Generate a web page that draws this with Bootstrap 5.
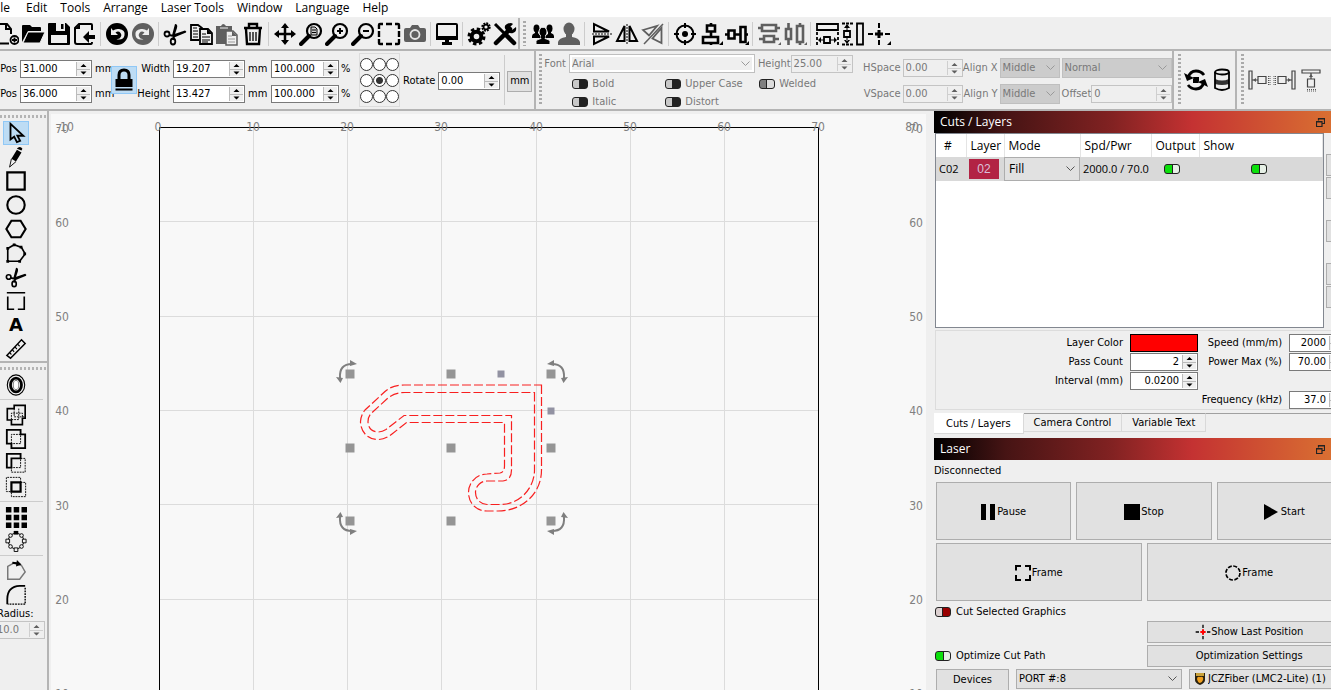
<!DOCTYPE html>
<html lang="en">
<head>
<meta charset="utf-8">
<meta name="viewport" content="width=device-width, initial-scale=1">
<title>Laser layout editor</title>
<link rel="stylesheet" href="https://cdn.jsdelivr.net/npm/bootstrap@5.3.0/dist/css/bootstrap.min.css">
<script defer src="https://cdn.jsdelivr.net/npm/bootstrap@5.3.0/dist/js/bootstrap.bundle.min.js"></script>
<style>
:root{--ui:"DejaVu Sans Condensed","DejaVu Sans",sans-serif;--seg:"Open Sans",sans-serif;--line:#b4b4b4}
body{height:100vh;overflow:hidden;background:#efefef;color:#000;font:11px/14px var(--ui)}
button{font:inherit;color:inherit;padding:0}
label{white-space:nowrap}
.menubar{height:18px;background:#fff;font:12px/16px var(--seg);gap:13px;border-bottom:1px solid #f0f0f0}
.menubar a{color:#000;text-decoration:none;white-space:nowrap}
.menubar a.cut-off{margin:0 3px 0 -9px}
.toolstrip{height:33px;border-bottom:2px solid var(--line);overflow:hidden}
.tb{width:26px;height:26px;flex:none;border:0;background:none;display:flex;align-items:center;justify-content:center}
.tb svg{width:24px;height:24px;flex:none}
.tb.first{margin-left:-6px}
.tb:disabled{color:#5f5f5f}
.vsep{width:6px;flex:none;height:24px;background:linear-gradient(#ccc,#ccc) 2px 0/1px 100% no-repeat}
.vsep.tall{height:50px}
.handle{display:flex;flex:none;align-self:stretch;border-left:2px solid var(--line);padding:0 4px 0 3px}
.grip{flex:none;width:3px;align-self:stretch;margin:3px 0;background:repeating-linear-gradient(#aaa 0 2px,transparent 2px 4px)}
.hgrip{height:3px;background:repeating-linear-gradient(90deg,#b4b4b4 0 2px,transparent 2px 4px)}
.propstrip{height:60px;border-bottom:2px solid var(--line);overflow:hidden}
.sect{flex:none;border-right:2px solid var(--line)}
.two{display:grid;flex:none;grid-template-columns:100%;grid-template-rows:18px 18px;row-gap:7px;align-items:center;padding-top:2px}
.two>.d-flex{gap:3px}
.pos{width:92px}
.dim{width:108px}
.unit{width:16px;margin-left:3px}
.unit.far{margin-right:7px}
.pct{width:12px;margin:0 6px 0 2px}
.spin{display:flex;height:18px;min-width:0;background:#fff;border:1px solid #7a7a7a;padding:1px}
.spin input{flex:1;min-width:0;border:0;padding:0 0 0 1px;background:none;color:inherit;font:inherit;outline:0}
.spin.num input{text-align:right;padding-right:3px}
.w72{width:72px;flex:none}.w68{width:68px}.w62{width:62px;flex:none}
.step{flex:none;width:14px;border-left:1px solid #bbb;background:#efefef url("data:image/svg+xml,%3Csvg xmlns='http://www.w3.org/2000/svg' width='13' height='14'%3E%3Cpath d='M0 7.500h13' stroke='%23bbb'/%3E%3Cpath d='M3.500 5h6L6.500 2zM3.500 9.500h6l-3 3z'/%3E%3C/svg%3E") center no-repeat}
.off{color:#787878}
.off .spin{background:#efefef;border-color:#c4c4c4}
.off .step{opacity:.6}
select{appearance:none;border:1px solid #adadad;border-radius:0;background:#e1e1e1 url("data:image/svg+xml,%3Csvg xmlns='http://www.w3.org/2000/svg' width='9' height='6'%3E%3Cpath d='M.5.5l4 4 4-4' fill='none' stroke='%23555'/%3E%3C/svg%3E") right 4px center no-repeat;color:inherit;font:inherit;padding:0 2px;height:20px}
.off select{background-color:#ccc;background-image:url("data:image/svg+xml,%3Csvg xmlns='http://www.w3.org/2000/svg' width='9' height='6'%3E%3Cpath d='M.5.5l4 4 4-4' fill='none' stroke='%23999'/%3E%3C/svg%3E");border-color:#bfbfbf;color:#787878;opacity:1}
.off .fsel{width:186px;height:19px;margin:0 3px;background-color:#efefef;box-shadow:inset 0 0 0 2px #fff}
.lockbtn{width:26px;height:28px;flex:none;background:#bddcf4;border:1px solid #90c8f6}
.anchors{flex:none;width:41px;height:54px;border:1px solid #dcdcdc;display:grid;grid-template-columns:repeat(3,13px);grid-auto-rows:16px;align-content:center;justify-items:center;align-items:center}
.anchors input{appearance:none;margin:0;width:13px;height:13px;border:1px solid #333;border-radius:50%;background:#fff}
.anchors input:checked{background:radial-gradient(#333 0 3px,#fff 4px)}
.rotate{gap:3px;margin:2px 2px 0 3px}
.sq{width:25px;height:21px;margin:2px 2px 0 -1px;border:1px solid #adadad;background:#e1e1e1}
.tog{appearance:none;flex:none;margin:0;width:16px;height:10px;border:1px solid #222;border-radius:3px;background:linear-gradient(90deg,#c8c8c8 0 6px,#222 6px)}
.tog:checked{background:linear-gradient(90deg,#808080 0 6px,#222 6px 7px,#dcdcdc 7px)}
.tog.live{background:linear-gradient(90deg,#dcd0d0 0 6px,#222 6px 7px,#900 7px)}
.tog.live:checked{background:linear-gradient(90deg,#0ce00c 0 7px,#222 7px 8px,#e6f0e6 8px)}
.fontsect .grip{margin:3px 2px 3px 3px}
.fontrow{padding-top:3px}
.fontgrid{display:grid;grid-template-columns:93px 94px auto;grid-auto-rows:18px;margin:2px 0 0 28px;align-items:center}
.spacegrid{display:grid;flex:none;grid-template-columns:37px 60px 33px 60px 110px;grid-template-rows:20px 20px;gap:6px 2px;align-items:center;margin-left:11px;padding-top:2px}
.spacegrid label{justify-self:end}
.rotary .tb:first-of-type{margin-left:2px}
.palette{width:49px;flex:none;border-right:2px solid var(--line);overflow:hidden}
.palette .tb{height:24px;margin-left:3px}
.palette .tb.on{background:#bddcf4;outline:1px solid #90c8f6;outline-offset:-1px}
.palette .tb svg{width:22px;height:22px}
.hgrip{margin:4px 0 3px}
.hsep{height:6px;background:linear-gradient(#ccc,#ccc) 0 2px/43px 1px no-repeat}
.split{height:2px;background:var(--line)}
.letter{font:900 18px/24px "DejaVu Sans",sans-serif}
.rad label{display:block;margin-left:-3px;line-height:14px}
.rad .spin{margin:0 2px 0 -6px}
.stage{flex:1;min-width:0;margin:3px 8px 0 2px;background:#f8f8f8}
.stage svg{display:block;width:100%;height:100%}
.stage text{font:12px var(--ui);fill:#808080}
.dock{width:397px;flex:none;overflow:hidden}
.ttl{height:22px;background:linear-gradient(90deg,#000,#461414 18%,#822222 45%,#c43232 65%,#d96f32);color:#fff;font:12px/22px var(--seg);padding:0 6px}
.wide{width:416px;margin-left:2px}
.layerbox{width:389px;height:195px;background:#fff;border:1px solid #828790;margin-left:1px;flex:none}
.layerbox table{table-layout:fixed;width:100%;font:11px/14px var(--seg)}
.layerbox th{font-weight:400;font-size:12px;height:23px;padding:0 4px;border-right:1px solid #e4e4e4}
.layerbox td{height:24px;padding:0 0 0 3px;background:#d9d9d9}
.layerbox td select{width:100%;height:24px;display:block;padding-left:4px;font-size:12px}
.layerbox td.outc{padding-left:13px}
.layerbox td.showc{padding-right:6px}
.swatch{width:30px;height:20px;background:#b22344;color:#d9c0d9;text-align:center;font:12px/20px "Liberation Sans",sans-serif}
.sidebtns{padding:21px 0 0 2px}
.sidebtns button{display:block;width:20px;height:22px;border:1px solid #adadad;background:#e1e1e1}
.sidebtns .gap{margin-top:21px}
.sidebtns button+button:not(.gap){margin-top:1px}
.params{margin:2px 0 0 1px;height:80px;border:1px solid #dcdcdc;display:grid;grid-template-columns:187px 68px 77px 56px;column-gap:7px;grid-template-rows:repeat(4,19px);padding-top:2px;align-items:center}
.params label{justify-self:end}
.colorpick{height:18px;background:#f00;border:1px solid #000}
.tabs{margin-top:3px;height:21px}
.tabs button{border:0;border-right:1px solid #d9d9d9;border-bottom:1px solid #d9d9d9;border-top:1px solid #a0a0a0;height:19px;padding:0 10px;background:#f0f0f0}
.tabs button.act{background:#fff;height:21px;padding:0 12px;border-top-color:#fff}
.tabs i{flex:1;border-top:1px solid #a0a0a0}
.discon{height:22px;line-height:22px}
.push{border:1px solid #adadad;background:#e1e1e1;display:flex;align-items:center;justify-content:center}
.big{height:58px;padding-top:1px}.mid{height:22px}
.g3{display:grid;grid-template-columns:repeat(3,1fr);gap:5px;margin-bottom:3px}
.g2{display:grid;grid-template-columns:repeat(2,1fr);column-gap:5px}
.selrow{gap:5px;margin:4px 0 2px -1px}
.opt{row-gap:2px}
.devrow{margin-top:2px;gap:7px}
.devb{width:73px}.port{width:166px}
.dev{padding-left:18px}
.badge-ic{left:5px;top:3px}
.redmid{--mid:#f00}
</style>
</head>
<body class="d-flex flex-column">
<svg class="d-none" xmlns="http://www.w3.org/2000/svg">
<defs>
<symbol id="new" viewBox="0 0 24 24"><path d="M14 21.500H1V2h11l4 5v5M11 2v5h5" fill="none" stroke="currentColor" stroke-width="2"/><circle cx="19.500" cy="18" r="4" fill="none" stroke="currentColor" stroke-width="1.800"/><path d="M19.500 15.500v5M17 18h5" stroke="currentColor" stroke-width="1.800"/></symbol>
<symbol id="open" viewBox="0 0 24 24"><path d="M1 20V4q0-1 1-1h7l2 2h8q1 0 1 1v3H7z"/><path d="M2 21L7 10h17l-5 11z" stroke="#efefef" stroke-width="1"/></symbol>
<symbol id="save" viewBox="0 0 24 24"><path d="M2 1h17l4 4v17q0 1-1 1H2q-1 0-1-1V2q0-1 1-1z"/><path d="M9 1h9v8H9z" fill="#efefef"/><path d="M14 2h2.500v5H14z"/><path d="M4 13h16v8H4z" fill="#efefef"/></symbol>
<symbol id="import" viewBox="0 0 24 24"><path d="M19 8V3q0-1-1-1H6L2 6v14q0 2 2 2h14q1 0 1-2" fill="none" stroke="currentColor" stroke-width="2"/><path d="M7 2v5H2z"/><path d="M10 15l6-6v4h6v4h-6v4z"/></symbol>
<symbol id="undo" viewBox="0 0 24 24"><circle cx="12" cy="12" r="11"/><path d="M6 6v7h7l-2.500-2.500q3-2 5 .5t-1 5.500l-3 .8q7 1.500 8-4T14 7q-3.500-.5-6 1.500z" fill="#efefef"/></symbol>
<symbol id="scis" viewBox="0 0 24 24"><path d="M9 13.500L12 2q3 0 2 4l-3 9zM10 12.500l12-4q2 1 1 2l-12 5z" fill="currentColor"/><circle cx="4" cy="12" r="2.500" fill="none" stroke="currentColor" stroke-width="1.800"/><ellipse cx="10" cy="19.500" rx="2.300" ry="3" fill="none" stroke="currentColor" stroke-width="1.800"/><path d="M6 13l5 1-1 4" fill="none" stroke="currentColor" stroke-width="2"/></symbol>
<symbol id="copy" viewBox="0 0 24 24"><path d="M10 18H2V3h7l4 3v2" fill="none" stroke="currentColor" stroke-width="1.800"/><path d="M4 6h4M4 9h5M4 12h5M4 15h5" stroke="currentColor"/><path d="M11 7h8l4 4v11H11z" fill="#efefef" stroke="currentColor" stroke-width="1.800"/><path d="M18 7v5h5z"/><path d="M13 12h4M13 15h8M13 18h8M13 20h6" stroke="currentColor"/></symbol>
<symbol id="paste" viewBox="0 0 24 24"><path d="M1 4h5q2-4 5 0h6v5h-6v13H1z"/><path d="M5 6h8" stroke="#efefef"/><path d="M11 9h7l4 4v10H11z" fill="#efefef" stroke="currentColor" stroke-width="1.500"/><path d="M17 9v5h5z"/><path d="M13 14h4M13 17h7M13 20h7" stroke="#999"/></symbol>
<symbol id="trash" viewBox="0 0 24 24"><path d="M3 6h18M8 5V2h8v3M5 7l1 15h12l1-15" fill="none" stroke="currentColor" stroke-width="2.400"/><path d="M9 10v9M12 10v9M15 10v9" stroke="currentColor" stroke-width="1.300"/></symbol>
<symbol id="move" viewBox="0 0 24 24"><path d="M12 3v18M3 12h18" stroke="currentColor" stroke-width="2.500"/><path d="M12 1l4 5H8zM12 23l4-5H8zM1 12l5-4v8zM23 12l-5-4v8z"/></symbol>
<symbol id="lens" viewBox="0 0 24 24"><circle cx="15" cy="9" r="7" fill="none" stroke="currentColor" stroke-width="2.200"/><path d="M10 14l-8 8" stroke="currentColor" stroke-width="4" stroke-linecap="round"/></symbol>
<symbol id="zdoc" viewBox="0 0 24 24"><use href="#lens"/><path d="M12 5h4l2 2v6h-6z" fill="#ccc" stroke="currentColor"/><path d="M13 8h4M13 10.500h4" stroke="currentColor"/></symbol>
<symbol id="zin" viewBox="0 0 24 24"><use href="#lens"/><path d="M15 6v6M12 9h6" stroke="currentColor" stroke-width="2"/></symbol>
<symbol id="zout" viewBox="0 0 24 24"><use href="#lens"/><path d="M12 9h6" stroke="currentColor" stroke-width="2"/></symbol>
<symbol id="frame" viewBox="0 0 24 24"><path d="M2 7V3q0-1 1-1h3M9 2h6M18 2h3q1 0 1 1v4M22 9v6M22 17v4q0 1-1 1h-3M15 22H9M6 22H3q-1 0-1-1v-4M2 15V9" fill="none" stroke="currentColor" stroke-width="2.400"/></symbol>
<symbol id="cam" viewBox="0 0 24 24"><path d="M3 6h4l2-3h6l2 3h4q2 0 2 2v10q0 2-2 2H3q-2 0-2-2V8q0-2 2-2z"/><circle cx="12" cy="12.500" r="4.500" fill="none" stroke="#e4e4e4" stroke-width="1.800"/></symbol>
<symbol id="mon" viewBox="0 0 24 24"><rect x="2" y="2" width="20" height="14" rx="1" fill="none" stroke="currentColor" stroke-width="2"/><path d="M1 14h22v4H1zM10 17h4v4h-4zM7 20h10v3H7z"/></symbol>
<symbol id="gears" viewBox="0 0 24 24"><circle cx="9.500" cy="14.500" r="7" fill="none" stroke="currentColor" stroke-width="4" stroke-dasharray="3.200 2.300"/><circle cx="9.500" cy="14.500" r="4.800" fill="none" stroke="currentColor" stroke-width="4"/><circle cx="19" cy="5" r="3.600" fill="none" stroke="currentColor" stroke-width="2.200" stroke-dasharray="1.800 1"/><circle cx="19" cy="5" r="2.400" fill="none" stroke="currentColor" stroke-width="1.600"/></symbol>
<symbol id="wrench" viewBox="0 0 24 24"><path d="M2 2l9 9" stroke="currentColor" stroke-width="3"/><path d="M13 13l8 8" stroke="currentColor" stroke-width="4.500" stroke-linecap="round"/><path d="M3 21L17 7" stroke="currentColor" stroke-width="4.500" stroke-linecap="round"/><path d="M20 2l-3 3 2 3 4-3q1 5-3 6t-7-3 1-6 6 0z"/></symbol>
<symbol id="user" viewBox="0 0 24 24"><ellipse cx="12" cy="7" rx="5.500" ry="6.500"/><path d="M9 11h6v4q7 1 8 5v3H1v-3q1-4 8-5z"/></symbol>
<symbol id="users" viewBox="0 0 24 24"><ellipse cx="5.500" cy="6.500" rx="3" ry="4"/><ellipse cx="18.500" cy="6.500" rx="3" ry="4"/><path d="M4 9h3v2l3 3v2H1v-2q0-2 3-3zM17 9h3v2q3 1 3 3v2h-9v-2l3-2z"/><g stroke="#efefef"><ellipse cx="12" cy="10" rx="4" ry="4.800"/><path d="M5 22.500v-3q0-2 5-3v-3h4v3q5 1 5 3v3z"/></g><path d="M10 12h4v4h-4z"/></symbol>
<symbol id="flipv" viewBox="0 0 24 24"><path d="M5 2v7.500h15zM5 22v-7.500h15z" fill="none" stroke="currentColor" stroke-width="2"/><path d="M3 12h20" stroke="#555" stroke-width="1.500" stroke-dasharray="2 1"/></symbol>
<symbol id="fliph" viewBox="0 0 24 24"><path d="M2 19h7.500V4zM22 19h-7.500V4z" fill="none" stroke="currentColor" stroke-width="2"/><path d="M12 2v21" stroke="#555" stroke-width="1.500" stroke-dasharray="2 1"/></symbol>
<symbol id="mirr" viewBox="0 0 24 24"><path d="M2 8l14-4-8 9.500zM20.500 6v15l-9-4.500z" fill="none" stroke="currentColor" stroke-width="1.800"/><path d="M22 2L3 22" stroke="currentColor" stroke-width="1.500"/></symbol>
<symbol id="target" viewBox="0 0 24 24"><circle cx="12" cy="12" r="8.500" fill="none" stroke="currentColor" stroke-width="2"/><circle cx="12" cy="12" r="3"/><path d="M12 1v5M12 18v5M1 12h5M18 12h5" stroke="currentColor" stroke-width="2"/></symbol>
<symbol id="alv" viewBox="0 0 24 24"><path d="M8 3.500h8v6H8zM4 15h15v6H4zM12 1v2M12 10v5M12 21v2" fill="none" stroke="currentColor" stroke-width="2.600"/><path d="M24 19v4h-4z"/></symbol>
<symbol id="alh" viewBox="0 0 24 24"><path d="M3.500 8.500h6v8h-6zM15.500 5h5v15h-5zM0 12.500h3M10 12.500h6M21 12.500h2" fill="none" stroke="currentColor" stroke-width="2.600"/><path d="M24 19v4h-4z"/></symbol>
<symbol id="div" viewBox="0 0 24 24"><path d="M5 3h14v6H5zM7 14h10v6H7zM1 6h4M19 6h4M2 17h5M17 17h5" fill="none" stroke="currentColor" stroke-width="2.600"/><path d="M24 20v3h-3z"/></symbol>
<symbol id="dih" viewBox="0 0 24 24"><path d="M3 7h5v10H3zM14 4h6v16h-6zM5.500 1v6M5.500 17v6M17 1v3M17 20v3" fill="none" stroke="currentColor" stroke-width="2.600"/><path d="M24 20v3h-3z"/></symbol>
<symbol id="wid" viewBox="0 0 24 24"><path d="M2 2h21v6H2z" fill="none" stroke="currentColor" stroke-width="1.800"/><path d="M2 10v13M23 10v13" stroke="currentColor" stroke-width="1.800" stroke-dasharray="3 2"/><path d="M9 15h6v6H9z" fill="none" stroke="currentColor" stroke-width="1.800"/><path d="M3 18l3-3v6zM22 18l-3-3v6zM5 17.500h4v1H5zM15 17.500h4v1h-4z"/></symbol>
<symbol id="hei" viewBox="0 0 24 24"><path d="M16 1.500h6v21h-6z" fill="none" stroke="currentColor" stroke-width="1.800"/><path d="M1 1.500h11M1 22.500h11" stroke="currentColor" stroke-width="1.800" stroke-dasharray="3 1"/><path d="M3 9h6v6H3z" fill="none" stroke="currentColor" stroke-width="1.800"/><path d="M6 2l3 4H3zM6 22l3-4H3zM5.500 5h1v4h-1zM5.500 15h1v4h-1z"/></symbol>
<symbol id="cross" viewBox="0 0 24 24"><path d="M12 1v5M12 18v5M1 12h5M18 12h5" stroke="currentColor" stroke-width="2"/><path d="M12 8v8M8 12h8" stroke="var(--mid,currentColor)" stroke-width="3"/></symbol>
<symbol id="lock" viewBox="0 0 24 24"><path d="M7 12V7q0-5 5-5t5 5v5" fill="none" stroke="currentColor" stroke-width="3"/><path d="M3.500 11h17v8h-17zM3.500 20.500h17v2h-17z"/></symbol>
<symbol id="cyc" viewBox="0 0 24 24"><path d="M4 10q2-7 8-7 5 0 8 4M20 14q-2 7-8 7-5 0-8-4" fill="none" stroke="currentColor" stroke-width="2.800"/><path d="M0 5l3 8 7-3zM24 19l-3-8-7 3zM9 9h6v6H9z"/></symbol>
<symbol id="cyl" viewBox="0 0 24 24"><path d="M5 4v16q7 4 14 0V4z" fill="#efefef"/><path d="M5 11q7 3 14 0v5q-7 2-14 0z" fill="#333"/><path d="M5 4v16q7 4 14 0V4" fill="none" stroke="currentColor" stroke-width="1.800"/><ellipse cx="12" cy="4" rx="7" ry="2.500" fill="#efefef" stroke="currentColor" stroke-width="1.800"/></symbol>
<symbol id="pushl" viewBox="0 0 24 24"><path d="M2 3h3v18H2zM11 8.500h8v7h-8zM5 12h6" fill="none" stroke="#444" stroke-width="1.200"/><path d="M6 12l3-2v4z" fill="#555"/><path d="M21.500 8v9M23 8v9" stroke="#555" stroke-dasharray="1 1"/></symbol>
<symbol id="arrow" viewBox="0 0 24 24"><path d="M6 2v17l4-3 3 6 3.500-1.500-3-5.500H20z" fill="none" stroke="currentColor" stroke-width="2"/></symbol>
<symbol id="pen" viewBox="0 0 24 24"><path d="M14 2q3-2 5 1l-1 2-5-2zM13 4l5 3-6 10-5-3z"/><path d="M7 14l-2 9 7-6" fill="none" stroke="currentColor"/></symbol>
<symbol id="rect" viewBox="0 0 24 24"><path d="M2.500 2.500h19v19h-19z" fill="none" stroke="currentColor" stroke-width="2.400"/></symbol>
<symbol id="circ" viewBox="0 0 24 24"><circle cx="12" cy="12" r="9.500" fill="none" stroke="currentColor" stroke-width="2.300"/></symbol>
<symbol id="hexa" viewBox="0 0 24 24"><path d="M7 3h10l5.500 9L17 21H7l-5.500-9z" fill="none" stroke="currentColor" stroke-width="2.300"/></symbol>
<symbol id="poly" viewBox="0 0 24 24"><path d="M3 21V7l7-4 8 3 4 7-6 8z" fill="none" stroke="currentColor" stroke-width="1.800"/><path d="M1.500 19.500h3v3h-3zM1.500 5.500h3v3h-3zM8.500 1.500h3v3h-3zM16 4h3v3h-3zM20 11.500h3v3h-3zM14.500 19.500h3v3h-3z"/></symbol>
<symbol id="edit" viewBox="0 0 24 24"><path d="M2 3h20M3 7v14h7M14 21h7V7" fill="none" stroke="currentColor" stroke-width="1.800"/></symbol>
<symbol id="ruler" viewBox="0 0 24 24"><path d="M2 19L18 2l4 4L6 22z" fill="none" stroke="currentColor" stroke-width="1.600"/><path d="M5 16l2 2M8 13l2 2M11 10l2 2M14 7l2 2" stroke="currentColor" stroke-width="1.200"/></symbol>
<symbol id="offs" viewBox="0 0 24 24"><ellipse cx="12" cy="12" rx="9.500" ry="11" fill="none" stroke="currentColor" stroke-width="1.200"/><ellipse cx="12" cy="12" rx="6" ry="7.500" fill="none" stroke="currentColor" stroke-width="3"/><ellipse cx="12" cy="12" rx="3" ry="5" fill="#fff" stroke="#777"/></symbol>
<symbol id="b1" viewBox="0 0 24 24"><path d="M10 1.500h12v14h-3v7H7v-5H2.500V5H10z" fill="none" stroke="currentColor" stroke-width="1.800"/><path d="M10 5v9h12M7 17V10h12v6M15 5v12H7" fill="none" stroke="currentColor" stroke-dasharray="2 1"/></symbol>
<symbol id="b2" viewBox="0 0 24 24"><path d="M2 2h15v5h5v15H7v-5H2z" fill="none" stroke="currentColor" stroke-width="2"/><path d="M7 17V7h10v10z" fill="none" stroke="currentColor" stroke-dasharray="2 1"/></symbol>
<symbol id="b3" viewBox="0 0 24 24"><path d="M2 2h15v5H7v10H2z" fill="none" stroke="currentColor" stroke-width="2"/><path d="M17 7h5v15H7v-5h10z" fill="none" stroke="currentColor" stroke-dasharray="2 1"/></symbol>
<symbol id="b4" viewBox="0 0 24 24"><path d="M7 7h10v10H7z" fill="none" stroke="currentColor" stroke-width="2.400"/><path d="M17 7V1.500H1.500V17H7M17 7h5.500v15.500H7V17" fill="none" stroke="currentColor" stroke-dasharray="2 1"/></symbol>
<symbol id="arr" viewBox="0 0 24 24"><path d="M1 1h6v6H1zM9.500 1h6v6h-6zM18 1h6v6h-6zM1 9.500h6v6H1zM9.500 9.500h6v6h-6zM18 9.500h6v6h-6zM1 18h6v6H1zM9.500 18h6v6h-6zM18 18h6v6h-6z"/></symbol>
<symbol id="rad" viewBox="0 0 24 24"><circle cx="12" cy="12" r="8.500" fill="none" stroke="currentColor"/><g fill="#efefef" stroke="currentColor"><path d="M10 19.500h4v4h-4zM1 10h4v4H1zM19 10h4v4h-4z"/><circle cx="6" cy="6" r="2"/><circle cx="18" cy="6" r="2"/><circle cx="6" cy="18" r="2"/><circle cx="18" cy="18" r="2"/></g><path d="M9.500 1h5v4h-5z"/></symbol>
<symbol id="poly2" viewBox="0 0 24 24"><path d="M3 21V7l7-4 8 3 4 7-6 8z" fill="none" stroke="#777" stroke-width="1.600"/><path d="M8 3l7 1" stroke="currentColor" stroke-width="2.400"/><path d="M13 0l5 5-6 2z"/></symbol>
<symbol id="fil" viewBox="0 0 24 24"><path d="M2.500 22v-6Q3 2.500 16 2h6" fill="none" stroke="currentColor" stroke-width="2"/><path d="M22 4v18H3" fill="none" stroke="currentColor" stroke-width="1.500" stroke-dasharray="2 1"/></symbol>
<symbol id="float" viewBox="0 0 9 9"><path d="M2.500 2.500V.5h6v5h-2M2.500 1h6M.5 3.500h5.500v5H.5zM.5 4h5.500" fill="none" stroke="#222" stroke-width="1.200"/></symbol>
<g id="rot"><path d="M340 378Q339 364 352 364" fill="none" stroke="#7f7f7f" stroke-width="2"/><path d="M350 360l7 4-7 2zM336 377l7 1-2.500 5z" fill="#7f7f7f"/></g>
</defs>
</svg>

<nav class="menubar d-flex flex-shrink-0" aria-label="Main menu">
<a class="cut-off" href="#">File</a><a href="#">Edit</a><a href="#">Tools</a><a href="#">Arrange</a><a href="#">Laser Tools</a><a href="#">Window</a><a href="#">Language</a><a href="#">Help</a>
</nav>

<div class="toolstrip d-flex align-items-center flex-shrink-0" role="toolbar" aria-label="Main tools">
<button class="tb first" aria-label="New"><svg><use href="#new"/></svg></button>
<button class="tb" aria-label="Open"><svg><use href="#open"/></svg></button>
<button class="tb" aria-label="Save"><svg><use href="#save"/></svg></button>
<button class="tb" aria-label="Import"><svg><use href="#import"/></svg></button>
<span class="vsep"></span>
<button class="tb" aria-label="Undo"><svg><use href="#undo"/></svg></button>
<button class="tb" aria-label="Redo" disabled><svg fill="currentColor"><use href="#undo" transform="matrix(-1 0 0 1 24 0)"/></svg></button>
<span class="vsep"></span>
<button class="tb" aria-label="Cut"><svg><use href="#scis"/></svg></button>
<button class="tb" aria-label="Copy"><svg><use href="#copy"/></svg></button>
<button class="tb" aria-label="Paste" disabled><svg fill="currentColor"><use href="#paste"/></svg></button>
<button class="tb" aria-label="Delete"><svg><use href="#trash"/></svg></button>
<span class="vsep"></span>
<button class="tb" aria-label="Pan"><svg><use href="#move"/></svg></button>
<button class="tb" aria-label="Zoom to page"><svg><use href="#zdoc"/></svg></button>
<button class="tb" aria-label="Zoom in"><svg><use href="#zin"/></svg></button>
<button class="tb" aria-label="Zoom out"><svg><use href="#zout"/></svg></button>
<button class="tb" aria-label="Frame selection"><svg><use href="#frame"/></svg></button>
<button class="tb" aria-label="Camera" disabled><svg fill="currentColor"><use href="#cam"/></svg></button>
<span class="vsep"></span>
<button class="tb" aria-label="Preview"><svg><use href="#mon"/></svg></button>
<span class="vsep"></span>
<button class="tb" aria-label="Settings"><svg><use href="#gears"/></svg></button>
<button class="tb" aria-label="Device settings"><svg><use href="#wrench"/></svg></button>
<span class="handle"><span class="grip"></span></span>
<button class="tb" aria-label="Group"><svg><use href="#users"/></svg></button>
<button class="tb" aria-label="Ungroup" disabled><svg fill="currentColor"><use href="#user"/></svg></button>
<span class="vsep"></span>
<button class="tb" aria-label="Flip vertical"><svg><use href="#flipv"/></svg></button>
<button class="tb" aria-label="Flip horizontal"><svg><use href="#fliph"/></svg></button>
<button class="tb" aria-label="Mirror" disabled><svg><use href="#mirr"/></svg></button>
<span class="vsep"></span>
<button class="tb" aria-label="Centre"><svg><use href="#target"/></svg></button>
<button class="tb" aria-label="Align vertical"><svg><use href="#alv"/></svg></button>
<button class="tb" aria-label="Align horizontal"><svg><use href="#alh"/></svg></button>
<span class="vsep"></span>
<button class="tb" aria-label="Distribute vertical" disabled><svg fill="currentColor"><use href="#div"/></svg></button>
<button class="tb" aria-label="Distribute horizontal" disabled><svg fill="currentColor"><use href="#dih"/></svg></button>
<span class="vsep"></span>
<button class="tb" aria-label="Same width"><svg><use href="#wid"/></svg></button>
<button class="tb" aria-label="Same height"><svg><use href="#hei"/></svg></button>
<button class="tb" aria-label="Move to position"><svg><use href="#cross"/><path d="M24 19v4h-4z"/></svg></button>
</div>

<div class="propstrip d-flex flex-shrink-0">
<section class="sect d-flex align-items-center" aria-label="Transform">
<div class="two pos">
<div class="d-flex align-items-center justify-content-end"><label for="xp">XPos</label><div class="spin w72"><input id="xp" value="31.000"><span class="step"></span></div></div>
<div class="d-flex align-items-center justify-content-end"><label for="yp">YPos</label><div class="spin w72"><input id="yp" value="36.000"><span class="step"></span></div></div>
</div>
<div class="two unit"><span>mm</span><span>mm</span></div>
<button class="lockbtn" aria-label="Lock aspect ratio"><svg width="24" height="24"><use href="#lock"/></svg></button>
<div class="two dim">
<div class="d-flex align-items-center justify-content-end"><label for="wd">Width</label><div class="spin w72"><input id="wd" value="19.207"><span class="step"></span></div></div>
<div class="d-flex align-items-center justify-content-end"><label for="hg">Height</label><div class="spin w72"><input id="hg" value="13.427"><span class="step"></span></div></div>
</div>
<div class="two unit far"><span>mm</span><span>mm</span></div>
<div class="two w68 flex-shrink-0">
<div class="spin"><input aria-label="Width percent" value="100.000"><span class="step"></span></div>
<div class="spin"><input aria-label="Height percent" value="100.000"><span class="step"></span></div>
</div>
<div class="two pct"><span>%</span><span>%</span></div>
<div class="anchors">
<input type="radio" name="an" aria-label="Top left"><input type="radio" name="an" aria-label="Top"><input type="radio" name="an" aria-label="Top right">
<input type="radio" name="an" aria-label="Left"><input type="radio" name="an" aria-label="Centre" checked><input type="radio" name="an" aria-label="Right">
<input type="radio" name="an" aria-label="Bottom left"><input type="radio" name="an" aria-label="Bottom"><input type="radio" name="an" aria-label="Bottom right">
</div>
<div class="rotate d-flex align-items-center"><label for="ro">Rotate</label><div class="spin w62"><input id="ro" value="0.00"><span class="step"></span></div></div>
<span class="vsep tall"></span>
<button class="sq">mm</button>
</section>
<section class="sect fontsect off d-flex" aria-label="Text">
<span class="grip"></span>
<div>
<div class="d-flex align-items-center fontrow"><label for="fo">Font</label><select id="fo" class="fsel" disabled><option>Arial</option></select><label for="fh">Height</label><div class="spin w62"><input id="fh" value="25.00" disabled><span class="step"></span></div></div>
<div class="fontgrid">
<label class="d-flex align-items-center gap-1"><input class="tog" type="checkbox" disabled>Bold</label>
<label class="d-flex align-items-center gap-1"><input class="tog" type="checkbox" disabled>Upper Case</label>
<label class="d-flex align-items-center gap-1"><input class="tog" type="checkbox" checked disabled>Welded</label>
<label class="d-flex align-items-center gap-1"><input class="tog" type="checkbox" disabled>Italic</label>
<label class="d-flex align-items-center gap-1"><input class="tog" type="checkbox" disabled>Distort</label>
</div>
</div>
<div class="spacegrid align-self-center">
<label for="hs">HSpace</label><div class="spin"><input id="hs" value="0.00" disabled><span class="step"></span></div><label for="ax">Align X</label><select id="ax" disabled><option>Middle</option></select><select aria-label="Text style" disabled><option>Normal</option></select>
<label for="vs">VSpace</label><div class="spin"><input id="vs" value="0.00" disabled><span class="step"></span></div><label for="ay">Align Y</label><select id="ay" disabled><option>Middle</option></select><div class="d-flex align-items-center"><label for="of" class="flex-shrink-0">Offset</label><div class="spin flex-fill"><input id="of" value="0" disabled><span class="step"></span></div></div>
</div>
</section>
<section class="sect rotary d-flex align-items-center ps-1" aria-label="Rotary"><span class="grip"></span>
<button class="tb" aria-label="Rotary setup"><svg><use href="#cyc"/></svg></button><button class="tb" aria-label="Cylinder correction"><svg><use href="#cyl"/></svg></button></section>
<section class="rotary d-flex align-items-center ps-1" aria-label="Docking"><span class="grip"></span>
<button class="tb" aria-label="Dock left"><svg><use href="#pushl"/></svg></button><button class="tb" aria-label="Dock right"><svg><use href="#pushl" transform="matrix(-1 0 0 1 24 0)"/></svg></button><button class="tb" aria-label="Dock top"><svg><use href="#pushl" transform="matrix(0 1 1 0 0 0)"/></svg></button></section>
</div>

<main class="d-flex flex-fill overflow-hidden">
<aside class="palette" role="toolbar" aria-label="Drawing tools">
<div class="hgrip"></div>
<button class="tb on" aria-label="Select"><svg><use href="#arrow"/></svg></button>
<button class="tb" aria-label="Draw lines"><svg><use href="#pen"/></svg></button>
<button class="tb" aria-label="Rectangle"><svg><use href="#rect"/></svg></button>
<button class="tb" aria-label="Ellipse"><svg><use href="#circ"/></svg></button>
<button class="tb" aria-label="Polygon"><svg><use href="#hexa"/></svg></button>
<button class="tb" aria-label="Edit nodes"><svg><use href="#poly"/></svg></button>
<button class="tb" aria-label="Trim"><svg><use href="#scis"/></svg></button>
<button class="tb" aria-label="Tabs"><svg><use href="#edit"/></svg></button>
<button class="tb letter" aria-label="Text">A</button>
<button class="tb" aria-label="Measure"><svg><use href="#ruler"/></svg></button>
<div class="split"></div>
<div class="hgrip"></div>
<button class="tb" aria-label="Offset shapes"><svg><use href="#offs"/></svg></button>
<div class="hsep"></div>
<button class="tb" aria-label="Weld"><svg><use href="#b1"/></svg></button>
<button class="tb" aria-label="Union"><svg><use href="#b2"/></svg></button>
<button class="tb" aria-label="Subtract"><svg><use href="#b3"/></svg></button>
<button class="tb" aria-label="Intersect"><svg><use href="#b4"/></svg></button>
<div class="hsep"></div>
<button class="tb" aria-label="Grid array"><svg><use href="#arr"/></svg></button>
<button class="tb" aria-label="Radial array"><svg><use href="#rad"/></svg></button>
<div class="hsep"></div>
<button class="tb" aria-label="Start point"><svg><use href="#poly2"/></svg></button>
<button class="tb" aria-label="Fillet"><svg><use href="#fil"/></svg></button>
<div class="rad"><label for="ra">Radius:</label><div class="off"><div class="spin"><input id="ra" value="10.0" disabled><span class="step"></span></div></div></div>
</aside>

<div class="stage">
<svg role="img" aria-label="Work area"><g transform="translate(-51 -114)">
<path d="M253.500 128v700M347.500 128v700M441.500 128v700M536.500 128v700M630.500 128v700M724.500 128v700M160 221.500h658M160 316.500h658M160 410.500h658M160 504.500h658M160 599.500h658" stroke="#dcdcdc"/>
<path d="M159.500 830V127.500h659V830" fill="none" stroke="#000"/>
<g text-anchor="middle"><text x="65" y="131">-10</text><text x="158" y="131">0</text><text x="253" y="131">10</text><text x="347" y="131">20</text><text x="441" y="131">30</text><text x="536" y="131">40</text><text x="630" y="131">50</text><text x="724" y="131">60</text><text x="818" y="131">70</text><text x="912" y="131">80</text>
<text x="62" y="133">70</text><text x="62" y="227">60</text><text x="62" y="321">50</text><text x="62" y="415">40</text><text x="62" y="510">30</text><text x="62" y="604">20</text><text x="62" y="698">10</text>
<text x="916" y="133">70</text><text x="916" y="227">60</text><text x="916" y="321">50</text><text x="916" y="415">40</text><text x="916" y="510">30</text><text x="916" y="604">20</text><text x="916" y="698">10</text></g>
<g fill="none" stroke="#f82020" stroke-width="1.200" stroke-dasharray="9 3">
<path d="M541.500 385V470C541.500 494 522 511 498 511H487C475 511 468.500 502 468.500 492.500S476 474 487 474L500 473Q504.500 472 504.500 466V422.500H406.500L392 434Q385 439.500 378 439.500C367 439.500 360.500 431 360.500 421.500Q361 415 365 410L385 391.500Q392 385 404 385Z"/>
<path d="M534.500 392.500V470C534.500 488 520 504.500 500 504.500H487C479 504 475.500 498 475.500 492.500S480 481 487 481H503Q511.500 480 511.500 470V415.500H404L386 429.500Q382 432 378 432C371 431.500 368 427 368 421.500Q368 417 371 413.500L388 398Q395 392.500 405 392.500Z"/></g>
<path fill="#959595" d="M345.500 369.500h9v9h-9zM446.500 369.500h9v9h-9zM546.500 369.500h9v9h-9zM345.500 443.500h9v9h-9zM446.500 443.500h9v9h-9zM546.500 443.500h9v9h-9zM345.500 516.500h9v9h-9zM446.500 516.500h9v9h-9zM546.500 516.500h9v9h-9z"/>
<path fill="#9292a2" d="M497.500 370.500h7v7h-7zM547.500 407.500h7v7h-7z"/>
<use href="#rot"/><use href="#rot" transform="matrix(-1 0 0 1 904 0)"/><use href="#rot" transform="matrix(1 0 0 -1 0 895)"/><use href="#rot" transform="matrix(-1 0 0 -1 904 895)"/>
</g></svg>
</div>

<aside class="dock">
<div class="ttl d-flex justify-content-between align-items-center">Cuts / Layers<svg width="9" height="9"><use href="#float"/></svg></div>
<div class="d-flex">
<div class="layerbox">
<table>
<colgroup><col style="width:30px"><col style="width:38px"><col style="width:76px"><col style="width:71px"><col style="width:48px"><col></colgroup>
<thead><tr><th class="ps-2">#</th><th>Layer</th><th>Mode</th><th>Spd/Pwr</th><th>Output</th><th>Show</th></tr></thead>
<tbody><tr><td>C02</td><td><div class="swatch">02</div></td><td class="p-0"><select aria-label="Mode"><option>Fill</option></select></td><td class="text-nowrap">2000.0 / 70.0</td><td class="outc"><input class="tog live d-block" type="checkbox" aria-label="Output" checked></td><td class="showc"><input class="tog live d-block mx-auto" type="checkbox" aria-label="Show" checked></td></tr></tbody>
</table>
</div>
<div class="sidebtns flex-shrink-0"><button aria-label="Move layer to top"></button><button aria-label="Move layer up"></button><button class="gap" aria-label="Delete layer"></button><button class="gap" aria-label="Move layer down"></button><button aria-label="Move layer to bottom"></button></div>
</div>
<div class="wide params">
<label for="lc">Layer Color</label><button id="lc" class="colorpick" aria-label="Layer Color"></button><label for="sp">Speed (mm/m)</label><div class="spin num"><input id="sp" value="2000"><span class="step"></span></div>
<label for="pc">Pass Count</label><div class="spin num"><input id="pc" value="2"><span class="step"></span></div><label for="pm">Power Max (%)</label><div class="spin num"><input id="pm" value="70.00"><span class="step"></span></div>
<label for="iv">Interval (mm)</label><div class="spin num"><input id="iv" value="0.0200"><span class="step"></span></div><span></span><span></span>
<span></span><span></span><label for="fq">Frequency (kHz)</label><div class="spin num"><input id="fq" value="37.0"><span class="step"></span></div>
</div>
<div class="tabs d-flex"><button class="act">Cuts / Layers</button><button>Camera Control</button><button>Variable Text</button><i></i></div>
<div class="ttl mt-1 d-flex justify-content-between align-items-center">Laser<svg width="9" height="9"><use href="#float"/></svg></div>
<div class="discon">Disconnected</div>
<div class="wide">
<div class="g3">
<button class="push big"><svg width="16" height="16"><path d="M0 0h5v16H0zM9 0h5v16H9z"/></svg>Pause</button>
<button class="push big"><svg width="17" height="16"><path d="M0 0h16v16H0z"/></svg>Stop</button>
<button class="push big"><svg width="17" height="16"><path d="M0 0l14 8-14 8z"/></svg>Start</button>
</div>
<div class="g2">
<button class="push big"><svg width="17" height="16"><path d="M1 5.500V1h5M10 1h5v4.500M15 10v5h-5M6 15H1v-5" fill="none" stroke="#000" stroke-width="2"/></svg>Frame</button>
<button class="push big"><svg width="17" height="16"><circle cx="8" cy="8" r="7" fill="none" stroke="#000" stroke-width="1.700" stroke-dasharray="4 1.500"/></svg>Frame</button>
</div>
<label class="d-flex align-items-center selrow"><input class="tog live" type="checkbox">Cut Selected Graphics</label>
<div class="g2 opt">
<span></span><button class="push mid"><svg width="16" height="16" viewBox="0 0 24 24" class="redmid"><use href="#cross"/></svg>Show Last Position</button>
<label class="d-flex align-items-center selrow my-0"><input class="tog live" type="checkbox" checked>Optimize Cut Path</label><button class="push mid">Optimization Settings</button>
</div>
<div class="d-flex devrow">
<button class="push mid devb">Devices</button>
<select aria-label="Port" class="port"><option>PORT #:8</option></select>
<div class="d-flex flex-fill position-relative"><select aria-label="Laser device" class="flex-fill dev"><option>JCZFiber (LMC2-Lite) (1)</option></select><svg class="position-absolute badge-ic" width="12" height="13"><path d="M1 1h10v7q0 3-5 5-5-2-5-5z" fill="#2a2210"/><path d="M2 1h8v3H2z" fill="#c9a23c"/><path d="M3 7q0-3 3-2 4-1 3 3-1 3-3 3T3 7z" fill="#f0a020"/></svg></div>
</div>
</div>
</aside>
</main>
</body>
</html>
